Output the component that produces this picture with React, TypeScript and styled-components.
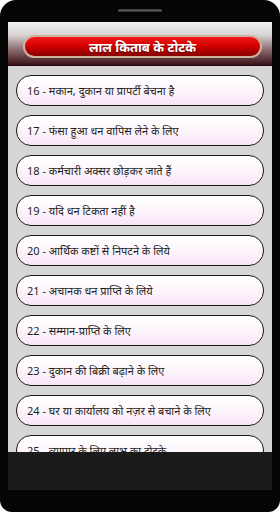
import React from 'react';
import styled, { createGlobalStyle } from 'styled-components';

const GlobalStyle = createGlobalStyle`
  html, body {
    margin: 0;
    padding: 0;
    background: #ffffff;
  }
  body {
    font-family: "Noto Sans", "Noto Sans Devanagari", "Lohit Devanagari", "FreeSans", sans-serif;
  }
`;

const Phone = styled.div`
  width: 280px;
  height: 512px;
  background: #050505;
  border-radius: 16px 16px 12px 12px;
  display: flex;
  flex-direction: column;
  overflow: hidden;
`;

const TopBezel = styled.div`
  height: 22px;
  display: flex;
  align-items: center;
  justify-content: center;
  padding-bottom: 2px;
  box-sizing: border-box;
`;

const Speaker = styled.div`
  width: 44px;
  height: 3px;
  border-radius: 2px;
  background: linear-gradient(#3a3a3a, #555 50%, #2a2a2a);
`;

const Screen = styled.div`
  margin: 0 8px;
  height: 430px;
  display: flex;
  flex-direction: column;
  background: #d6d6d6;
`;

const Header = styled.div`
  height: 44px;
  flex-shrink: 0;
  box-sizing: border-box;
  padding: 13px 10px 8px 15px;
  background: linear-gradient(#f2f2f2 0%, #d8d4d4 30%, #8a6a6e 65%, #3a1219 100%);
  border-bottom: 1px solid #2a0a10;
`;

const TitlePill = styled.div`
  height: 23px;
  box-sizing: border-box;
  border-radius: 12px;
  border: 2px solid #cdb39f;
  background: linear-gradient(#f21a1a 0%, #d40000 45%, #8a0000 100%);
  display: flex;
  align-items: center;
  justify-content: center;
  color: #fff;
  font-size: 13px;
  font-weight: 700;
  text-shadow: 0 1px 1px rgba(0, 0, 0, 0.5);
`;

const List = styled.div`
  flex: 1;
  overflow: hidden;
  display: flex;
  flex-direction: column;
  gap: 9px;
  padding: 9px 8px 0 8px;
`;

const Item = styled.div`
  height: 31px;
  flex-shrink: 0;
  box-sizing: border-box;
  border: 1.5px solid #1a1a1a;
  border-radius: 15px;
  background: linear-gradient(#ffffff 0%, #fdf6fc 50%, #f7e6f5 100%);
  display: flex;
  align-items: center;
  padding-left: 10px;
  font-size: 11px;
  color: #1e1e1e;
  white-space: nowrap;
`;

const NavBar = styled.div`
  margin: 0 8px;
  height: 38px;
  background: #1b1b1b;
`;

const items = [
  '16 - मकान, दुकान या प्रापर्टी बेचना है',
  '17 - फंसा हुआ धन वापिस लेने के लिए',
  '18 - कर्मचारी अक्सर छोड़कर जाते हैं',
  '19 - यदि धन टिकता नहीं है',
  '20 - आर्थिक कष्टों से निपटने के लिये',
  '21 - अचानक धन प्राप्ति के लिये',
  '22 - सम्मान-प्राप्ति के लिए',
  '23 - दुकान की बिक्री बढ़ाने के लिए',
  '24 - घर या कार्यालय को नज़र से बचाने के लिए',
  '25 - व्यापार के लिए लाभ का टोटके',
];

export default function App() {
  return (
    <>
      <GlobalStyle />
      <Phone>
        <TopBezel>
          <Speaker />
        </TopBezel>
        <Screen>
          <Header>
            <TitlePill>लाल किताब के टोटके</TitlePill>
          </Header>
          <List>
            {items.map((t) => (
              <Item key={t}>{t}</Item>
            ))}
          </List>
        </Screen>
        <NavBar />
      </Phone>
    </>
  );
}
